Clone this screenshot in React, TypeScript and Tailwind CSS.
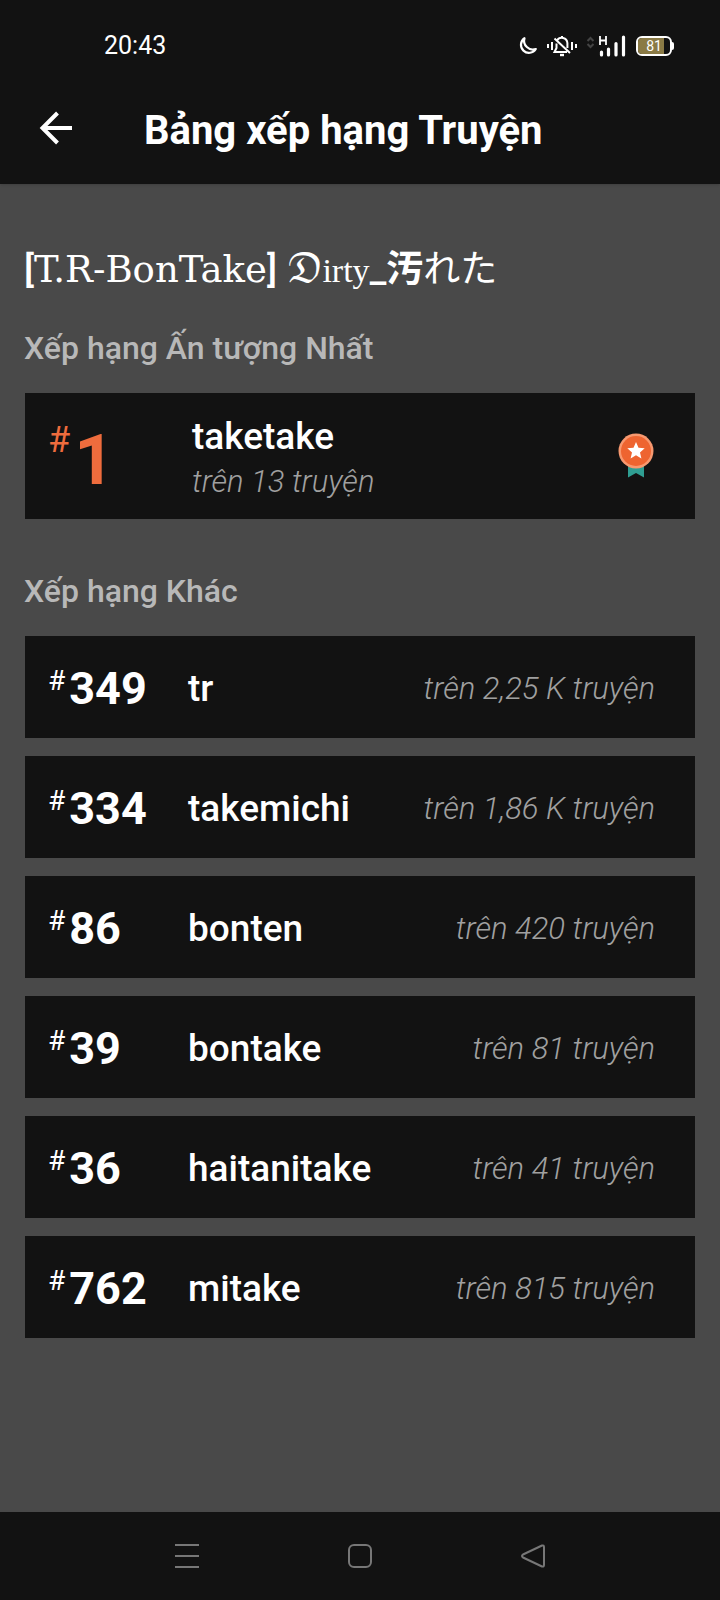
type Rank = { rank: number; tag: string; total: string };

const otherRanks: Rank[] = [
  { rank: 349, tag: "tr", total: "2,25 K" },
  { rank: 334, tag: "takemichi", total: "1,86 K" },
  { rank: 86, tag: "bonten", total: "420" },
  { rank: 39, tag: "bontake", total: "81" },
  { rank: 36, tag: "haitanitake", total: "41" },
  { rank: 762, tag: "mitake", total: "815" },
];

function StatusBar() {
  return (
    <div className="flex h-22 items-center justify-between pt-[3px] pr-[46px] pl-26">
      <time className="text-[25px] leading-8 font-normal">20:43</time>
      <div className="flex items-center">
        <svg width="20" height="20" viewBox="0 0 20 20" fill="none" stroke="white" strokeWidth="2.2" strokeLinejoin="round" aria-hidden="true">
          <path d="M6.500 2.200a8 8 0 1 0 11.300 10.800A8.800 8.800 0 0 1 6.500 2.200Z" />
        </svg>
        <svg className="ml-2" width="32" height="22" viewBox="0 0 32 22" fill="none" stroke="white" strokeWidth="2" aria-hidden="true">
          <path d="M2 9v4M6 7v8M26 7v8M30 9v4M16 1v2" />
          <path d="M11 5.5A5.6 5.6 0 0 1 21.4 8v5M10.500 8.500v4.500L8.500 17H21M8.500 3.500L24 18" />
          <path d="M14 20h4" strokeWidth="2.4" />
        </svg>
        <svg className="ml-2" width="40" height="24" viewBox="0 0 40 24" fill="none" aria-hidden="true">
          <path d="M1.500 7L4.500 4l3 3M1.500 10l3 3 3-3" stroke="#444" strokeWidth="2" />
          <path d="M14 2v9M20 2v9M14 6.500h6" stroke="white" strokeWidth="1.800" />
          <path d="M15.500 18v3M22.500 15v6M30 9.500v11.500M37.500 3v18" stroke="white" strokeWidth="3.200" strokeLinecap="round" />
        </svg>
        <div className="ml-2.5 flex items-center">
          <div className="relative flex h-5 w-9 items-center justify-center overflow-hidden rounded-md border-2 border-white text-sm leading-4">
            <div className="absolute inset-y-0 left-0 w-4/5 bg-[#8a7a45]" />
            <span className="relative">81</span>
          </div>
          <div className="h-2 w-0.5 rounded-r bg-white" />
        </div>
      </div>
    </div>
  );
}

function Award() {
  return (
    <svg className="mb-1" width="36" height="46" viewBox="0 0 36 46" role="img" aria-label="Huy chương">
      <path d="M10 30h16v14.500l-8-4.500-8 4.500Z" fill="#2f9e92" />
      <circle cx="18" cy="18" r="17.500" fill="#f7986f" />
      <circle cx="18" cy="18" r="15" fill="#ee6430" />
      <path d="M18 9l2.500 5.700 6.200.6-4.700 4.100 1.400 6.100L18 22.300l-5.400 3.200 1.400-6.100-4.700-4.100 6.200-.6Z" fill="white" />
    </svg>
  );
}

export default function App() {
  return (
    <div className="flex min-h-screen flex-col bg-[#494949] font-[Roboto,sans-serif] text-white">
      <header className="bg-[#121212] shadow-sm">
        <StatusBar />
        <div className="flex h-24 items-center pb-3 pl-9">
          <button type="button" aria-label="Quay lại" className="flex size-10 items-center justify-center pb-1">
            <svg width="36" height="36" viewBox="0 0 36 36" fill="none" stroke="white" strokeWidth="4" aria-hidden="true">
              <path d="M34 18H5M19.500 3L4.500 18l15 15" />
            </svg>
          </button>
          <h1 className="ml-17 pt-0.5 text-[40px] leading-12 font-bold">Bảng xếp hạng Truyện</h1>
        </div>
      </header>

      <main className="flex-1 px-6 pt-[62px]">
        <h2 className="text-[37px] leading-12 font-medium">
          [<span className="font-['DejaVu_Serif',serif] leading-10 font-normal">T.R-BonTake</span>]{" "}
          <span className="font-['DejaVu_Math_TeX_Gyre',serif] leading-10 font-normal">𝔇</span>
          <span className="font-['Liberation_Serif',serif] text-[34px] leading-10 font-normal">irty</span>_
          <span className="font-['Noto_Sans_CJK_JP',sans-serif] leading-10 font-bold">汚</span>
          <span className="font-['Noto_Sans_CJK_JP',sans-serif] leading-10 font-normal">れた</span>
        </h2>

        <section className="mt-[30px]">
          <h3 className="text-[32px] leading-12 font-medium text-[#b8b8b8]">Xếp hạng Ấn tượng Nhất</h3>
          <div className="mx-px mt-[21px] flex h-[126px] items-center bg-[#121212] pt-1 pr-[41px] pl-[23px]">
            <div className="flex w-36 items-start pt-1 text-[#ee6c3d]">
              <span className="text-[36px] leading-10">#</span>
              <span className="ml-1 text-[70px] leading-20 font-bold">1</span>
            </div>
            <div className="flex-1">
              <p className="text-[37px] leading-12 font-medium">taketake</p>
              <p className="text-[31px] leading-[42px] font-light text-[#a0a0a0] italic">trên 13 truyện</p>
            </div>
            <Award />
          </div>
        </section>

        <section className="mt-12">
          <h3 className="text-[32px] leading-12 font-medium text-[#b8b8b8]">Xếp hạng Khác</h3>
          <ul className="mx-px mt-[21px] flex flex-col gap-[18px]">
            {otherRanks.map(({ rank, tag, total }) => (
              <li key={tag} className="flex h-[102px] items-center bg-[#121212] pt-1 pr-10 pl-[23px]">
                <div className="flex w-35 items-start">
                  <span className="text-[28px] leading-10">#</span>
                  <span className="ml-1 text-[45px] leading-14 font-bold">{rank}</span>
                </div>
                <span className="flex-1 text-[37px] leading-12 font-medium">{tag}</span>
                <span className="text-[31px] leading-10 font-light text-[#a0a0a0] italic">trên {total} truyện</span>
              </li>
            ))}
          </ul>
        </section>
      </main>

      <nav className="flex h-22 items-center justify-around bg-[#121212] px-25" aria-label="Điều hướng">
        <button type="button" aria-label="Gần đây">
          <svg width="26" height="26" viewBox="0 0 26 26" fill="none" stroke="#777" strokeWidth="2">
            <path d="M1 2h24M1 13h24M1 24h24" />
          </svg>
        </button>
        <button type="button" aria-label="Trang chủ">
          <svg width="26" height="26" viewBox="0 0 26 26" fill="none" stroke="#777" strokeWidth="2">
            <rect x="2" y="2" width="22" height="22" rx="5" />
          </svg>
        </button>
        <button type="button" aria-label="Trở lại">
          <svg width="26" height="26" viewBox="0 0 26 26" fill="none" stroke="#777" strokeWidth="2" strokeLinejoin="round">
            <path d="M22 2.500L3 11.500Q1 13 3 14.500L22 23.500Q24 24 24 22V4Q24 2 22 2.500Z" />
          </svg>
        </button>
      </nav>
    </div>
  );
}
